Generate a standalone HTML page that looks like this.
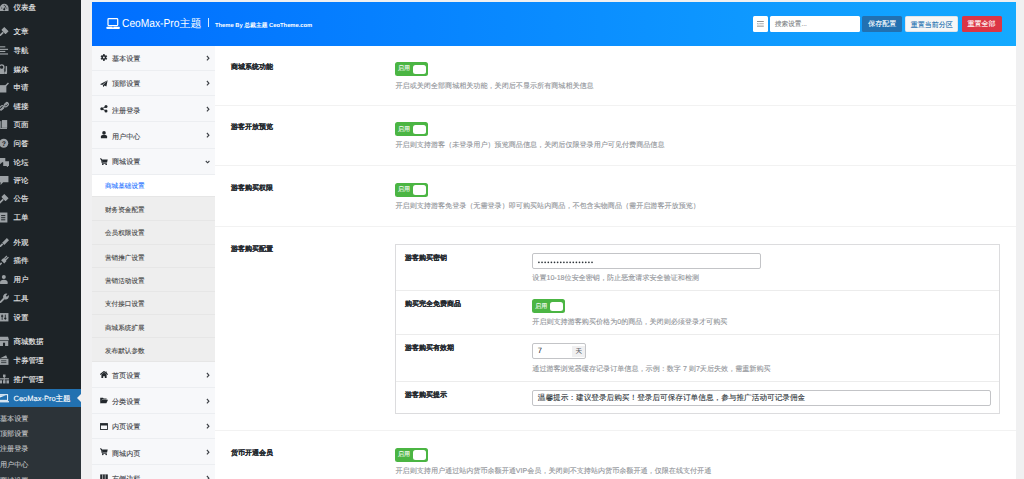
<!DOCTYPE html>
<html><head><meta charset="utf-8"><style>
*{box-sizing:border-box;margin:0;padding:0}
html,body{width:1024px;height:479px;overflow:hidden}
body{background:#f0f0f1;font-family:"Liberation Sans",sans-serif;position:relative;color:#1d2327;text-rendering:geometricPrecision;-webkit-text-stroke-width:0.1px}
#wpmenu{position:absolute;left:0;top:0;width:81px;height:479px;background:#1d2327}
.mi{position:absolute;left:0;width:81px;height:19px;line-height:19px;font-size:7.5px;color:#f0f0f1;white-space:nowrap}
.mi span{position:absolute;left:13.5px;top:0}
.act{background:#2271b1;color:#fff}
.act:after{content:"";position:absolute;right:0;top:5px;border:4.5px solid transparent;border-right-color:#f0f0f1;border-left-width:0;border-right-width:4px}
#wpsub{position:absolute;left:0;top:407px;width:81px;height:72px;background:#2c3338}
#wpsub div{position:absolute;left:0;font-size:7.1px;color:#c3c4c7;height:15px;line-height:15px;white-space:nowrap}
#panel{position:absolute;left:92px;top:2px;width:924px;height:477px;background:#fff}
#hdr{position:absolute;left:0;top:0;width:924px;height:44px;background:linear-gradient(to right,#006eff,#14aaff)}
#hdr .logo{position:absolute;left:13.5px;top:15.6px;width:14px;height:11px}
#hdr .ttl{position:absolute;left:30px;top:15.4px;-webkit-text-stroke-width:0;font-size:11.5px;color:#fff;line-height:14px;white-space:nowrap}
#hdr .bar{position:absolute;left:115.5px;top:16.4px;width:1.6px;height:9px;background:rgba(255,255,255,.85)}
#hdr .by{position:absolute;left:123px;top:19.8px;-webkit-text-stroke-width:0;font-size:5.8px;font-weight:bold;color:#fff;line-height:8px;white-space:nowrap}
#hdr .exp{position:absolute;left:661px;top:14px;width:15px;height:16px;background:#fff;border-radius:1.5px}
#hdr .srch{position:absolute;left:678px;top:14px;width:90px;height:16px;background:#fff;border-radius:1.5px;font-size:6.6px;color:#7c7f84;line-height:17.5px;padding-left:5px}
#hdr .btn{position:absolute;top:14px;height:15.6px;border-radius:1.5px;font-size:7px;line-height:17.4px;text-align:center;white-space:nowrap}
#hdr .b1{left:770px;width:40.3px;background:#2271b1;color:#fff}
#hdr .b2{left:813px;width:53.4px;background:#f6f7f7;color:#2271b1;border:0.6px solid #e2e4e7}
#hdr .b3{left:869.5px;width:40px;background:#dc3545;color:#fff}
#nav{position:absolute;left:0;top:44px;width:123px;height:433px;background:#f7f8fa}
#nav .ni{position:absolute;left:0;width:123px;height:25.6px;border-bottom:0.6px solid #eceef1;font-size:7.1px;color:#3c4045;line-height:25.6px}
#nav .ni span{position:absolute;left:20px;top:1.3px}
#nav .ni svg.ic{position:absolute;left:8px;top:50%;margin-top:-3.6px}
#nav .ni svg.ch{position:absolute;left:113.5px;top:50%;margin-top:-2.8px}
#nav .si{position:absolute;left:0;width:123px;height:23.5px;border-bottom:0.6px solid #e6e6e6;background:#eeeeee;font-size:6.6px;color:#444;line-height:23.5px}
#nav .si span{position:absolute;left:13px;top:1.8px}
#nav .si.on{background:#fff;color:#2271ff}
#content{position:absolute;left:123px;top:44px;width:801px;height:433px;background:#fff}
.sec{position:absolute;left:0;width:801px;border-bottom:1px solid #f2f2f2}
.sec .t{position:absolute;left:16px;font-size:7.0px;font-weight:bold;-webkit-text-stroke-width:0.1px;color:#23282d;line-height:10px;white-space:nowrap}
.tg{position:absolute;width:33px;height:14px;background:#4bb543;border-radius:2.5px}
.tg span{position:absolute;left:3px;top:0.4px;line-height:14px;font-size:6px;color:#fff;-webkit-text-stroke-width:0.08px}
.tg:after{content:"";position:absolute;left:18px;top:2.5px;width:13px;height:9.5px;background:#fff;border-radius:2.5px}
.d{position:absolute;font-size:7.09px;color:#909398;line-height:10px;white-space:nowrap}
#box{position:absolute;left:180px;top:17px;width:605px;height:169.9px;border:0.8px solid #dcdcde}
#box .r{position:absolute;left:0;width:603px;border-bottom:0.6px solid #ececec}
#box .t{left:9px}
.inp{position:absolute;height:16px;border:1px solid #c3c4c7;border-radius:2px;background:#fff;font-size:7.65px;line-height:14px;padding-left:4.5px;color:#2c3338;white-space:nowrap}
</style></head><body>
<div id="wpmenu">
<div class="mi" style="top:-2.5px"><svg style="position:absolute;left:-1px;top:4px" width="10.5" height="10.5" viewBox="0 0 10 10"><path d="M0.9 8.6 V5.8 A4.1 4.1 0 0 1 9.1 5.8 V8.6 Z" fill="#9ca1a5"/><circle cx="5" cy="7" r="1" fill="#1d2327"/><path d="M5 7 L6.5 3.5" stroke="#1d2327" stroke-width="0.7"/><circle cx="2.6" cy="5.8" r="0.5" fill="#1d2327"/><circle cx="7.4" cy="5.8" r="0.5" fill="#1d2327"/><circle cx="5" cy="3.2" r="0.5" fill="#1d2327"/></svg><span>仪表盘</span></div>
<div class="mi" style="top:21.5px"><svg style="position:absolute;left:-1px;top:4px" width="10.5" height="10.5" viewBox="0 0 10 10"><path d="M0 10 L4 6 M3 3.5 L6.5 7 M5 2 L8 5 L6.5 6.5 L3.5 3.5 Z" stroke="#9ca1a5" stroke-width="1.6" fill="#9ca1a5"/></svg><span>文章</span></div>
<div class="mi" style="top:40.5px"><svg style="position:absolute;left:-1px;top:4px" width="10.5" height="10.5" viewBox="0 0 10 10"><rect x="0" y="1.2" width="6" height="1.1" fill="#9ca1a5"/><rect x="0" y="3.6" width="8.6" height="1.1" fill="#9ca1a5"/><rect x="0" y="5.6" width="6" height="1.1" fill="#9ca1a5"/><rect x="0" y="8" width="8.6" height="1.1" fill="#9ca1a5"/></svg><span>导航</span></div>
<div class="mi" style="top:59.5px"><svg style="position:absolute;left:-1px;top:4px" width="10.5" height="10.5" viewBox="0 0 10 10"><circle cx="2.5" cy="3" r="2.2" fill="none" stroke="#9ca1a5" stroke-width="1.3"/><rect x="0" y="5" width="5" height="5" fill="#9ca1a5"/><path d="M7 2 V8.5" stroke="#9ca1a5" stroke-width="1.4"/><circle cx="6.3" cy="8.5" r="1.3" fill="#9ca1a5"/></svg><span>媒体</span></div>
<div class="mi" style="top:78.0px"><svg style="position:absolute;left:-1px;top:4px" width="10.5" height="10.5" viewBox="0 0 10 10"><rect x="0" y="3" width="7" height="7" fill="#9ca1a5"/><path d="M4.5 5.5 L9 1" stroke="#9ca1a5" stroke-width="1.3"/></svg><span>申请</span></div>
<div class="mi" style="top:96.5px"><svg style="position:absolute;left:-1px;top:4px" width="10.5" height="10.5" viewBox="0 0 10 10"><path d="M1.5 8.5 L4 6 M6 4 L8.5 1.5" stroke="#9ca1a5" stroke-width="1.4"/><rect x="0.3" y="5" width="4.5" height="3" rx="1.5" transform="rotate(-45 2.5 6.5)" fill="none" stroke="#9ca1a5" stroke-width="1.1"/><rect x="4.7" y="2" width="4.5" height="3" rx="1.5" transform="rotate(-45 7 3.5)" fill="none" stroke="#9ca1a5" stroke-width="1.1"/></svg><span>链接</span></div>
<div class="mi" style="top:115.0px"><svg style="position:absolute;left:-1px;top:4px" width="10.5" height="10.5" viewBox="0 0 10 10"><rect x="2.8" y="1" width="5" height="7.4" fill="#9ca1a5"/><rect x="1.2" y="2" width="1" height="7.2" fill="#9ca1a5"/><rect x="1.2" y="8.6" width="6.4" height="0.9" fill="#9ca1a5"/></svg><span>页面</span></div>
<div class="mi" style="top:133.5px"><svg style="position:absolute;left:-1px;top:4px" width="10.5" height="10.5" viewBox="0 0 10 10"><circle cx="4.5" cy="5" r="4.3" fill="#9ca1a5"/><text x="4.5" y="7.6" font-size="6.5" text-anchor="middle" fill="#1d2327" font-family="Liberation Sans" font-weight="bold">?</text></svg><span>问答</span></div>
<div class="mi" style="top:152.5px"><svg style="position:absolute;left:-1px;top:4px" width="10.5" height="10.5" viewBox="0 0 10 10"><path d="M0 1 H6 V5 H3 L1 7 V5 H0 Z" fill="#9ca1a5"/><path d="M4 4 H9.5 V8.5 H8.5 V10 L7 8.5 H4 Z" fill="#9ca1a5"/></svg><span>论坛</span></div>
<div class="mi" style="top:171.2px"><svg style="position:absolute;left:-1px;top:4px" width="10.5" height="10.5" viewBox="0 0 10 10"><path d="M0 1 H9 V7 H4 L1.5 9.5 V7 H0 Z" fill="#9ca1a5"/></svg><span>评论</span></div>
<div class="mi" style="top:189.2px"><svg style="position:absolute;left:-1px;top:4px" width="10.5" height="10.5" viewBox="0 0 10 10"><path d="M0 10 L4 6 M3 3.5 L6.5 7 M5 2 L8 5 L6.5 6.5 L3.5 3.5 Z" stroke="#9ca1a5" stroke-width="1.6" fill="#9ca1a5"/></svg><span>公告</span></div>
<div class="mi" style="top:208.0px"><svg style="position:absolute;left:-1px;top:4px" width="10.5" height="10.5" viewBox="0 0 10 10"><rect x="0" y="0.5" width="8" height="9.5" fill="#9ca1a5"/><rect x="2" y="3" width="4" height="0.9" fill="#1d2327"/><rect x="2" y="5" width="4" height="0.9" fill="#1d2327"/><rect x="2" y="7" width="4" height="0.9" fill="#1d2327"/></svg><span>工单</span></div>
<div class="mi" style="top:232.5px"><svg style="position:absolute;left:-1px;top:4px" width="10.5" height="10.5" viewBox="0 0 10 10"><path d="M0 10 L3.5 6.5" stroke="#9ca1a5" stroke-width="1.8"/><path d="M3 5.5 L7.5 1 L9.5 3 L5 7.5 Z" fill="#9ca1a5"/></svg><span>外观</span></div>
<div class="mi" style="top:251.2px"><svg style="position:absolute;left:-1px;top:4px" width="10.5" height="10.5" viewBox="0 0 10 10"><path d="M0.5 9.5 L2.5 7.5" stroke="#9ca1a5" stroke-width="1.4"/><path d="M2 5 L5 8 L7 6 L6.5 3.5 L4 3 Z" fill="#9ca1a5"/><path d="M5 3.5 L7.5 1 M6.5 4.5 L9 2" stroke="#9ca1a5" stroke-width="1.2"/></svg><span>插件</span></div>
<div class="mi" style="top:270.0px"><svg style="position:absolute;left:-1px;top:4px" width="10.5" height="10.5" viewBox="0 0 10 10"><circle cx="4.6" cy="2.8" r="1.9" fill="#9ca1a5"/><path d="M1 9.6 V7.8 Q1 5.4 4.6 5.4 Q8.2 5.4 8.2 7.8 V9.6 Z" fill="#9ca1a5"/></svg><span>用户</span></div>
<div class="mi" style="top:288.5px"><svg style="position:absolute;left:-1px;top:4px" width="10.5" height="10.5" viewBox="0 0 10 10"><path d="M0.8 9.2 L5 5" stroke="#9ca1a5" stroke-width="1.8"/><path d="M4 4.5 A3 3 0 0 1 8 0.8 L6.5 2.5 L7.5 3.5 L9.2 2 A3 3 0 0 1 5.5 6 Z" fill="#9ca1a5"/></svg><span>工具</span></div>
<div class="mi" style="top:307.5px"><svg style="position:absolute;left:-1px;top:4px" width="10.5" height="10.5" viewBox="0 0 10 10"><rect x="0" y="1" width="9" height="8" fill="#9ca1a5"/><path d="M3 2.5 V7.5 M6 2.5 V7.5" stroke="#1d2327" stroke-width="0.8"/><rect x="2" y="3.3" width="2" height="1.2" fill="#1d2327"/><rect x="5" y="5.5" width="2" height="1.2" fill="#1d2327"/></svg><span>设置</span></div>
<div class="mi" style="top:331.5px"><svg style="position:absolute;left:-1px;top:4px" width="10.5" height="10.5" viewBox="0 0 10 10"><path d="M1 0.8 H8.6 L9.6 4 H0 Z" fill="#9ca1a5"/><rect x="0.8" y="4.6" width="8" height="5.2" fill="#9ca1a5"/><rect x="3.8" y="6.4" width="2" height="3.4" fill="#1d2327"/></svg><span>商城数据</span></div>
<div class="mi" style="top:350.5px"><svg style="position:absolute;left:-1px;top:4px" width="10.5" height="10.5" viewBox="0 0 10 10"><path d="M0.5 3.2 L6.8 0.3 L8 3.2 Z" fill="#9ca1a5"/><rect x="0" y="3.6" width="9" height="5.8" fill="#9ca1a5"/><rect x="2" y="5.2" width="5" height="0.7" fill="#1d2327"/><rect x="2" y="7" width="5" height="0.7" fill="#1d2327"/></svg><span>卡券管理</span></div>
<div class="mi" style="top:369.5px"><svg style="position:absolute;left:-1px;top:4px" width="10.5" height="10.5" viewBox="0 0 10 10"><rect x="3.8" y="0.5" width="2.4" height="2.5" fill="#9ca1a5"/><rect x="0.5" y="4" width="9" height="1.2" fill="#9ca1a5"/><rect x="0.5" y="6" width="2.4" height="3" fill="#9ca1a5"/><rect x="3.8" y="6" width="2.4" height="3" fill="#9ca1a5"/><rect x="7.1" y="6" width="2.4" height="3" fill="#9ca1a5"/><rect x="4.5" y="2.5" width="1" height="4" fill="#9ca1a5"/></svg><span>推广管理</span></div>
<div class="mi act" style="top:388.5px"><svg style="position:absolute;left:-1px;top:4px" width="10.5" height="10.5" viewBox="0 0 10 10"><rect x="-2" y="1.6" width="10.2" height="5.4" fill="none" stroke="#fff" stroke-width="0.9"/><path d="M-1.5 2.1 L6.5 2.1 L-1.5 5.2 Z" fill="#fff" opacity="0.9"/><rect x="-2" y="7.8" width="11.5" height="1.1" fill="#fff"/></svg><span>CeoMax-Pro主题</span></div>
</div>
<div id="wpsub">
  <div style="top:4.7px">基本设置</div>
  <div style="top:19.8px">顶部设置</div>
  <div style="top:34.5px">注册登录</div>
  <div style="top:50.5px">用户中心</div>
  <div style="top:66.5px">商城设置</div>
</div>
<div id="panel">
<div id="hdr">
    <svg class="logo" viewBox="0 0 14 11"><rect x="2" y="0.7" width="9.7" height="6.9" rx="0.8" fill="none" stroke="#fff" stroke-width="1.25"/><rect x="0.3" y="8.7" width="13.6" height="2.2" rx="1" fill="#fff"/><rect x="5.9" y="8.6" width="2" height="0.7" rx="0.3" fill="#0a70ff"/></svg>
    <div class="ttl"><span style="display:inline-block;transform:scaleX(0.89);transform-origin:0 0;margin-right:-7.1px">CeoMax-Pro</span><span style="font-size:11px">主题</span></div>
    <div class="bar"></div>
    <div class="by">Theme By 总裁主题 CeoTheme.com</div>
    <div class="exp"><svg style="position:absolute;left:3.9px;top:5px" width="7" height="6" viewBox="0 0 7 6"><rect x="0" y="0.2" width="6.8" height="0.8" fill="#777"/><rect x="2.2" y="2.4" width="4.6" height="0.8" fill="#999"/><path d="M0 2.8 L1.3 1.9 V3.7 Z" fill="#777"/><rect x="0" y="4.7" width="6.8" height="0.8" fill="#777"/></svg></div>
    <div class="srch">搜索设置...</div>
    <div class="btn b1">保存配置</div>
    <div class="btn b2">重置当前分区</div>
    <div class="btn b3">重置全部</div>
  </div>
<div id="nav"><div class="ni" style="top:0px;height:25.0px;line-height:25.0px"><svg class="ic" width="8" height="7.5" viewBox="0 0 8 7.5"><g transform="translate(3.9 3.5)"><circle r="2.4" fill="#23282d"/><g stroke="#23282d" stroke-width="1.5"><path d="M0 -3.4 V3.4"/><path d="M-2.95 -1.7 L2.95 1.7"/><path d="M-2.95 1.7 L2.95 -1.7"/></g><circle r="0.9" fill="#f7f8fa"/></g></svg><span>基本设置</span><svg class="ch" width="4" height="6" viewBox="0 0 4 6"><path d="M0.9 1 L2.9 3.2 L0.9 5.4" stroke="#3c4045" stroke-width="1.15" fill="none"/></svg></div>
<div class="ni" style="top:25px;height:25.3px;line-height:25.3px"><svg class="ic" width="8" height="7.5" viewBox="0 0 8 7.5"><path d="M7.6 0.2 L0 4.3 L2.2 4.9 Z" fill="#23282d"/><path d="M7.6 0.2 L2.8 5.3 L3.4 7.2 L4.5 5.6 L6.4 6.6 Z" fill="#23282d"/></svg><span>顶部设置</span><svg class="ch" width="4" height="6" viewBox="0 0 4 6"><path d="M0.9 1 L2.9 3.2 L0.9 5.4" stroke="#3c4045" stroke-width="1.15" fill="none"/></svg></div>
<div class="ni" style="top:50.3px;height:26.1px;line-height:26.1px"><svg class="ic" width="8" height="7.5" viewBox="0 0 8 7.5"><circle cx="6" cy="1.6" r="1.5" fill="#23282d"/><circle cx="1.8" cy="3.8" r="1.5" fill="#23282d"/><circle cx="6" cy="5.9" r="1.5" fill="#23282d"/><path d="M6 1.6 L1.8 3.8 L6 5.9" stroke="#23282d" stroke-width="0.9" fill="none"/></svg><span>注册登录</span><svg class="ch" width="4" height="6" viewBox="0 0 4 6"><path d="M0.9 1 L2.9 3.2 L0.9 5.4" stroke="#3c4045" stroke-width="1.15" fill="none"/></svg></div>
<div class="ni" style="top:76.4px;height:26.3px;line-height:26.3px"><svg class="ic" width="8" height="7.5" viewBox="0 0 8 7.5"><circle cx="4" cy="1.9" r="1.8" fill="#23282d"/><path d="M0.9 7.2 V5.6 Q0.9 4 2.5 4 H5.5 Q7.1 4 7.1 5.6 V7.2 Z" fill="#23282d"/></svg><span>用户中心</span><svg class="ch" width="4" height="6" viewBox="0 0 4 6"><path d="M0.9 1 L2.9 3.2 L0.9 5.4" stroke="#3c4045" stroke-width="1.15" fill="none"/></svg></div>
<div class="ni" style="top:102.7px;height:25.9px;line-height:25.9px"><svg class="ic" width="8" height="7.5" viewBox="0 0 8 7.5"><path d="M0 0.9 H1.4 L2.2 5.2 H6.6" stroke="#23282d" stroke-width="1" fill="none"/><path d="M1.9 1.6 H7.7 L7.1 4.6 H2.4 Z" fill="#23282d"/><circle cx="2.8" cy="6.4" r="0.8" fill="#23282d"/><circle cx="6.2" cy="6.4" r="0.8" fill="#23282d"/></svg><span>商城设置</span><svg class="ch" width="5" height="4" viewBox="0 0 5 4" style="margin-top:-1.6px;left:113px"><path d="M0.8 1 L2.6 2.8 L4.4 1" stroke="#3c4045" stroke-width="1.1" fill="none"/></svg></div>
<div class="si on" style="top:128.6px;height:22.4px;line-height:22.4px"><span>商城基础设置</span></div>
<div class="si" style="top:151px;height:23.6px;line-height:23.6px"><span>财务资金配置</span></div>
<div class="si" style="top:174.6px;height:24.3px;line-height:24.3px"><span>会员权限设置</span></div>
<div class="si" style="top:198.9px;height:23.3px;line-height:23.3px"><span>营销推广设置</span></div>
<div class="si" style="top:222.2px;height:23.4px;line-height:23.4px"><span>营销活动设置</span></div>
<div class="si" style="top:245.6px;height:23.4px;line-height:23.4px"><span>支付接口设置</span></div>
<div class="si" style="top:269px;height:23.4px;line-height:23.4px"><span>商城系统扩展</span></div>
<div class="si" style="top:292.4px;height:23.2px;line-height:23.2px"><span>发布默认参数</span></div>
<div class="ni" style="top:315.6px;height:26.9px;line-height:26.9px"><svg class="ic" width="8" height="7.5" viewBox="0 0 8 7.5"><path d="M0.3 3.6 L4 0.6 L7.7 3.6" stroke="#23282d" stroke-width="1.2" fill="none"/><path d="M1.4 3.6 L4 1.6 L6.6 3.6 V7 H4.8 V5.2 H3.2 V7 H1.4 Z" fill="#23282d"/><rect x="5.6" y="0.5" width="1" height="2" fill="#23282d"/></svg><span>首页设置</span><svg class="ch" width="4" height="6" viewBox="0 0 4 6"><path d="M0.9 1 L2.9 3.2 L0.9 5.4" stroke="#3c4045" stroke-width="1.15" fill="none"/></svg></div>
<div class="ni" style="top:342.5px;height:25.3px;line-height:25.3px"><svg class="ic" width="8" height="7.5" viewBox="0 0 8 7.5"><path d="M0.2 0.8 H3 L3.7 1.6 H6.6 V2.6 H2 L0.2 6 Z" fill="#23282d"/><path d="M1.6 2.8 H8 L6.4 6.3 H0 Z" fill="#23282d"/></svg><span>分类设置</span><svg class="ch" width="4" height="6" viewBox="0 0 4 6"><path d="M0.9 1 L2.9 3.2 L0.9 5.4" stroke="#3c4045" stroke-width="1.15" fill="none"/></svg></div>
<div class="ni" style="top:367.8px;height:25.6px;line-height:25.6px"><svg class="ic" width="8" height="7.5" viewBox="0 0 8 7.5"><rect x="0.5" y="0.6" width="7" height="5.9" fill="none" stroke="#23282d" stroke-width="0.9"/><rect x="0.5" y="0.6" width="7" height="1.9" fill="#23282d"/></svg><span>内页设置</span><svg class="ch" width="4" height="6" viewBox="0 0 4 6"><path d="M0.9 1 L2.9 3.2 L0.9 5.4" stroke="#3c4045" stroke-width="1.15" fill="none"/></svg></div>
<div class="ni" style="top:393.4px;height:26.0px;line-height:26.0px"><svg class="ic" width="8" height="7.5" viewBox="0 0 8 7.5"><path d="M0 0.9 H1.4 L2.2 5.2 H6.6" stroke="#23282d" stroke-width="1" fill="none"/><path d="M1.9 1.6 H7.7 L7.1 4.6 H2.4 Z" fill="#23282d"/><circle cx="2.8" cy="6.4" r="0.8" fill="#23282d"/><circle cx="6.2" cy="6.4" r="0.8" fill="#23282d"/></svg><span>商城内页</span><svg class="ch" width="4" height="6" viewBox="0 0 4 6"><path d="M0.9 1 L2.9 3.2 L0.9 5.4" stroke="#3c4045" stroke-width="1.15" fill="none"/></svg></div>
<div class="ni" style="top:419.4px;height:25.6px;line-height:25.6px"><svg class="ic" width="8" height="7.5" viewBox="0 0 8 7.5"><rect x="0.2" y="0.4" width="7.6" height="6.6" fill="#23282d"/><path d="M2.6 0.4 V7 M5.2 0.4 V7" stroke="#f7f8fa" stroke-width="0.6"/></svg><span>右侧边栏</span><svg class="ch" width="4" height="6" viewBox="0 0 4 6"><path d="M0.9 1 L2.9 3.2 L0.9 5.4" stroke="#3c4045" stroke-width="1.15" fill="none"/></svg></div></div>
<div id="content">
<div class="sec" style="top:0px;height:59.7px"><div class="t" style="top:17.3px">商城系统功能</div><div class="tg" style="left:180px;top:16.1px"><span>启用</span></div><div class="d" style="left:180.5px;top:34.5px">开启或关闭全部商城相关功能，关闭后不显示所有商城相关信息</div></div>
<div class="sec" style="top:59.7px;height:60.7px"><div class="t" style="top:17.3px">游客开放预览</div><div class="tg" style="left:180px;top:16.6px"><span>启用</span></div><div class="d" style="left:180.5px;top:34.5px">开启则支持游客（未登录用户）预览商品信息，关闭后仅限登录用户可见付费商品信息</div></div>
<div class="sec" style="top:120.4px;height:61px"><div class="t" style="top:17.3px">游客购买权限</div><div class="tg" style="left:180px;top:16.6px"><span>启用</span></div><div class="d" style="left:180.5px;top:34.5px">开启则支持游客免登录（无需登录）即可购买站内商品，不包含实物商品（需开启游客开放预览）</div></div>
<div class="sec" style="top:181.4px;height:203.9px"><div class="t" style="top:17.8px">游客购买配置</div>
      <div id="box">
        <div class="r" style="top:0;height:45.9px"><div class="t" style="top:8.6px">游客购买密钥</div><div class="inp" style="left:136.3px;top:7.9px;width:229px"><svg style="position:absolute;left:4.5px;top:6.6px" width="60" height="3"><circle cx="0.90" cy="1.3" r="0.85" fill="#2c3338"/><circle cx="4.03" cy="1.3" r="0.85" fill="#2c3338"/><circle cx="7.15" cy="1.3" r="0.85" fill="#2c3338"/><circle cx="10.28" cy="1.3" r="0.85" fill="#2c3338"/><circle cx="13.40" cy="1.3" r="0.85" fill="#2c3338"/><circle cx="16.52" cy="1.3" r="0.85" fill="#2c3338"/><circle cx="19.65" cy="1.3" r="0.85" fill="#2c3338"/><circle cx="22.77" cy="1.3" r="0.85" fill="#2c3338"/><circle cx="25.90" cy="1.3" r="0.85" fill="#2c3338"/><circle cx="29.02" cy="1.3" r="0.85" fill="#2c3338"/><circle cx="32.15" cy="1.3" r="0.85" fill="#2c3338"/><circle cx="35.27" cy="1.3" r="0.85" fill="#2c3338"/><circle cx="38.40" cy="1.3" r="0.85" fill="#2c3338"/><circle cx="41.52" cy="1.3" r="0.85" fill="#2c3338"/><circle cx="44.65" cy="1.3" r="0.85" fill="#2c3338"/><circle cx="47.77" cy="1.3" r="0.85" fill="#2c3338"/><circle cx="50.90" cy="1.3" r="0.85" fill="#2c3338"/><circle cx="54.02" cy="1.3" r="0.85" fill="#2c3338"/></svg></div><div class="d" style="left:136.3px;top:28px">设置10-18位安全密钥，防止恶意请求安全验证和检测</div></div>
        <div class="r" style="top:45.9px;height:44.1px"><div class="t" style="top:8.4px">购买完全免费商品</div><div class="tg" style="left:136.3px;top:7.9px"><span>启用</span></div><div class="d" style="left:136.3px;top:25.8px">开启则支持游客购买价格为0的商品，关闭则必须登录才可购买</div></div>
        <div class="r" style="top:90px;height:47.1px"><div class="t" style="top:9px">游客购买有效期</div><div class="inp" style="left:136.3px;top:7.9px;width:54px">7<span style="position:absolute;left:39.2px;top:1.6px;width:12.5px;height:11.3px;background:#f0f0f1;line-height:11.3px;text-align:center;font-size:6.5px;color:#50575e">天</span></div><div class="d" style="left:136.3px;top:28.6px">通过游客浏览器缓存记录订单信息，示例：数字 7 则7天后失效，需重新购买</div></div>
        <div class="r" style="top:137.1px;height:32.8px;border-bottom:0"><div class="t" style="top:8.4px">游客购买提示</div><div class="inp" style="left:136.3px;top:7.3px;width:458.5px">温馨提示：建议登录后购买！登录后可保存订单信息，参与推广活动可记录佣金</div></div>
      </div>
    </div>
<div class="sec" style="top:385.3px;height:61px;border-bottom:0"><div class="t" style="top:17.3px">货币开通会员</div><div class="tg" style="left:180px;top:16.6px"><span>启用</span></div><div class="d" style="left:180.5px;top:34.5px">开启则支持用户通过站内货币余额开通VIP会员，关闭则不支持站内货币余额开通，仅限在线支付开通</div></div>
</div>
</div></body></html>
